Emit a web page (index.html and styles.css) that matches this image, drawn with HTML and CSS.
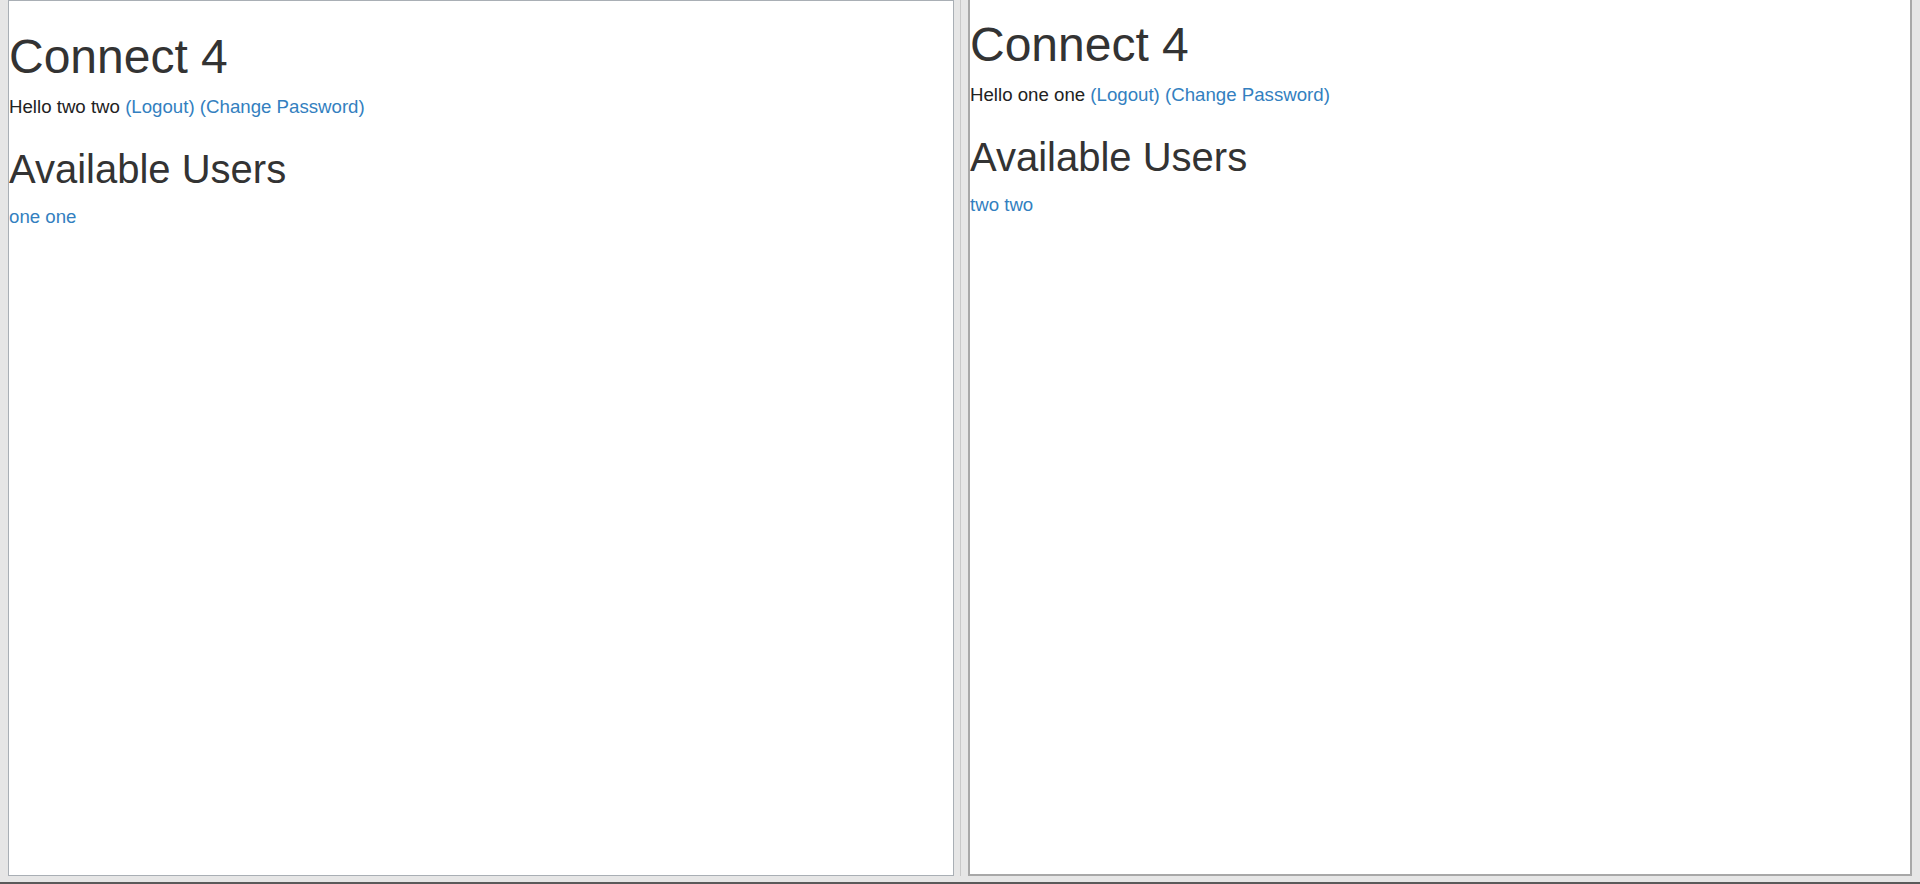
FILE: index.html
```html
<!DOCTYPE html>
<html lang="en">
<head>
<meta charset="utf-8">
<title>Connect 4</title>
<link rel="stylesheet" href="styles.css">
</head>
<body>
<div class="desktop">
  <div class="win win-left">
    <div class="page">
      <h1 class="title">Connect 4</h1>
      <p class="greeting">Hello two two <a href="#">(Logout)</a> <a href="#">(Change Password)</a></p>
      <h2 class="subtitle">Available Users</h2>
      <a class="user" href="#">one one</a>
    </div>
  </div>
  <div class="splitter"></div>
  <div class="win win-right">
    <div class="page page-scrolled">
      <h1 class="title">Connect 4</h1>
      <p class="greeting">Hello one one <a href="#">(Logout)</a> <a href="#">(Change Password)</a></p>
      <h2 class="subtitle">Available Users</h2>
      <a class="user" href="#">two two</a>
    </div>
  </div>
</div>
<div class="taskbar"></div>
</body>
</html>
```
FILE: styles.css
```css
html, body {
  margin: 0;
  padding: 0;
  height: 100%;
  overflow: hidden;
}
body {
  background: #e6e6e6;
  font-family: "Liberation Sans", Arial, sans-serif;
  font-size: 18.67px;
  line-height: 1.42857;
  color: #333333;
}
.desktop {
  display: flex;
  height: 876px;
  padding-left: 8px;
}
.win {
  background: #ffffff;
  overflow: hidden;
}
.win-left {
  width: 944px;
  height: 874px;
  border: 1px solid #a9afb5;
}
.splitter {
  width: 14px;
  display: flex;
  justify-content: center;
}
.splitter::before {
  content: "";
  display: block;
  width: 1px;
  margin-left: -1px;
  background: #c8c8c8;
}
.win-right {
  width: 940px;
  height: 874px;
  border-left: 2px solid #a8a8a8;
  border-right: 2px solid #a8a8a8;
  border-bottom: 2px solid #a8a8a8;
}
.page-scrolled {
  margin-top: -11px;
}
.title {
  font-size: 48px;
  font-weight: 500;
  line-height: 1.1;
  margin: 29.5px 0 10.5px;
  color: #333333;
}
.subtitle {
  font-size: 40px;
  font-weight: 500;
  line-height: 1.1;
  margin: 26.67px 0 13.33px;
  color: #333333;
}
.greeting {
  margin: 0 0 13.33px;
  color: #222222;
}
a {
  color: #337fc0;
  text-decoration: none;
}
.taskbar {
  height: 8px;
  background: linear-gradient(#e6e6e6 0 6px, #5a5a5a 6px);
}
```
